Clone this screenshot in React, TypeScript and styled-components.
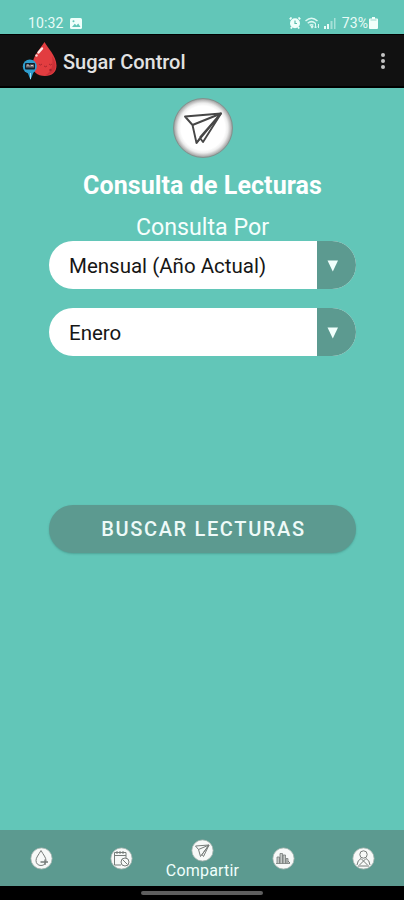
import React from "react";
import styled, { createGlobalStyle } from "styled-components";

const teal = "#62c6b8";
const sage = "#5c9a90";

const GlobalStyle = createGlobalStyle`
  * { box-sizing: border-box; }
  body { margin: 0; background: ${teal}; font-family: Roboto, "Liberation Sans", sans-serif; }
`;

const Screen = styled.div`
  width: 404px;
  height: 900px;
  display: flex;
  flex-direction: column;
  overflow: hidden;
  background: ${teal};
`;

const StatusBar = styled.div`
  height: 34px;
  flex: none;
  display: flex;
  justify-content: space-between;
  align-items: flex-start;
  padding: 14px 26px 0 28px;
  color: #e9fbf7;
  font-size: 14px;
  line-height: 18px;
`;

const StatusGroup = styled.div<{ $gap: number }>`
  display: flex;
  align-items: center;
  gap: ${(p) => p.$gap}px;
  height: 18px;
  svg { display: block; }
`;

const Clock = styled.span`
  letter-spacing: 0.15px;
`;

const Battery = styled.span`
  display: flex;
  align-items: center;
  gap: 1px;
  margin-left: 2px;
  letter-spacing: 0.1px;
`;

const AppBar = styled.header`
  height: 54px;
  flex: none;
  display: flex;
  align-items: center;
  padding: 0 19px 0 22px;
  background: #111;
  border-top: 1px solid #000;
  border-bottom: 2px solid #000;
`;

const AppTitle = styled.h1`
  flex: 1;
  margin: 2px 0 0 4px;
  color: #e2e2e2;
  font-size: 20px;
  font-weight: 500;
  line-height: 24px;
  letter-spacing: -0.03px;
`;

const MenuButton = styled.button`
  display: flex;
  flex-direction: column;
  gap: 2px;
  padding: 0;
  border: 0;
  background: none;
`;

const MenuDot = styled.i`
  width: 4px;
  height: 4px;
  border-radius: 50%;
  background: #c4c4c4;
`;

const Content = styled.main`
  flex: 1;
  display: flex;
  flex-direction: column;
  align-items: center;
  padding: 10px 0 0 1px;
`;

const HeroBadge = styled.div`
  width: 60px;
  height: 60px;
  flex: none;
  border-radius: 50%;
  border: 1px solid #82918d;
  background: radial-gradient(circle closest-side, #fff 0 76%, #ededed 86%, #a3a3a3 100%);
  svg { display: block; }
`;

const Title = styled.h2`
  margin: 13px 0 0;
  color: #fff;
  font-size: 25px;
  font-weight: 700;
  line-height: 30px;
  letter-spacing: 0.08px;
  white-space: nowrap;
`;

const Label = styled.p`
  margin: 12px 0 0;
  color: #f6fffd;
  font-size: 23.200px;
  line-height: 28px;
`;

const Select = styled.button<{ $top: number }>`
  width: 307px;
  height: 48px;
  flex: none;
  margin: ${(p) => p.$top}px 0 0;
  display: flex;
  padding: 0;
  border: 0;
  border-radius: 24px;
  overflow: hidden;
  background: #fff;
  font-family: inherit;
`;

const SelectValue = styled.span`
  flex: 1;
  padding-left: 20px;
  color: #161616;
  font-size: 20.500px;
  line-height: 50px;
  text-align: left;
`;

const SelectArrow = styled.span`
  width: 39px;
  height: 48px;
  background: ${sage};
  svg { display: block; }
`;

const SearchButton = styled.button`
  width: 307px;
  height: 48px;
  flex: none;
  margin-top: 149px;
  padding: 0 0 0 2px;
  border: 0;
  border-radius: 24px;
  background: ${sage};
  box-shadow: 0 1px 2px rgba(55, 120, 110, 0.45);
  color: #eefaf8;
  font-family: inherit;
  font-size: 20px;
  font-weight: 500;
  line-height: 48px;
  letter-spacing: 1.650px;
`;

const TabBar = styled.nav`
  height: 56px;
  flex: none;
  display: grid;
  grid-template-columns: repeat(5, 1fr);
  padding-left: 1px;
  background: ${sage};
`;

const Tab = styled.a<{ $active?: boolean }>`
  display: flex;
  flex-direction: column;
  align-items: center;
  padding-top: ${(p) => (p.$active ? 9 : 17)}px;
  color: #f0fffc;
  font-size: 16px;
  line-height: 18px;
  letter-spacing: 0.2px;
  svg { display: block; flex: none; }
`;

const GestureArea = styled.footer`
  height: 14px;
  flex: none;
  display: flex;
  justify-content: center;
  padding-top: 5px;
  background: #000;
`;

const GestureHandle = styled.div`
  width: 122px;
  height: 4px;
  border-radius: 2px;
  background: #5e5e5e;
`;

const DropLogo = () => (
  <svg width="37" height="40" viewBox="0 0 37 40">
    <path d="M22.5 1C25 6 34.5 15 34.5 24.5C34.5 31 30 35 23 35C15 35 10.5 30.5 10.5 24C10.5 15 19 7 22.5 1Z" fill="#e23d40" />
    <path d="M30 15C36 24 35 33 23 34.500C31 30 31 22 30 15Z" fill="#cc3037" />
    <path d="M16.500 11.500L20 7.500" stroke="#ffe7e5" strokeWidth="2.400" strokeLinecap="round" />
    <circle cx="14.500" cy="14.500" r="1.200" fill="#ffd5d3" />
    <path d="M17 23Q18.500 25 20 23M22 25Q23.500 26.500 25 25M27 23Q28.500 25 30 23" fill="none" stroke="#9c2229" strokeWidth=".8" />
    <circle cx="28.500" cy="29" r="1.200" fill="#a5212a" />
    <path d="M5 30H12L8.500 39Z" fill="#2e9dce" />
    <circle cx="7.800" cy="25.500" r="7" fill="#2e9dce" />
    <rect x="3" y="22" width="10" height="6.500" rx="1" fill="#141e29" />
    <path d="M5 23.500V26.500M5 24H7V26.500M9 23.500V26.500M9 24.500H11M11 23.500V26.500" stroke="#e9d9d6" strokeWidth="0.900" fill="none" />
    <path d="M8.500 32V38" stroke="#a3ddf1" />
  </svg>
);

const PictureIcon = () => (
  <svg width="12" height="11" viewBox="0 0 12 11">
    <rect width="12" height="11" rx="1.500" fill="#effffb" />
    <path d="M2 9L4.800 5.800L6.500 7.500L8.200 5.500L10.500 9Z" fill={teal} />
    <circle cx="3.500" cy="3.200" r="1" fill={teal} />
  </svg>
);

const AlarmIcon = () => (
  <svg width="12" height="12" viewBox="0 0 12 12">
    <path d="M2.500 .5L.8 2.300M9.500 .5L11.200 2.300M3 10L1.800 11.500M9 10L10.200 11.500" stroke="#effffb" strokeWidth="1.800" />
    <circle cx="6" cy="6.300" r="5" fill="#effffb" />
    <path d="M6 3.500V6.500H8" fill="none" stroke="#5ebdad" strokeWidth="1.200" />
  </svg>
);

const WifiIcon = () => (
  <svg width="15" height="12" viewBox="0 0 15 12" fill="none" stroke="#dcf8f2" strokeWidth="1.500">
    <path d="M.5 4Q6.500 -1.500 12.500 4M2.700 6.200Q6.500 3 10.300 6.200M4.700 8.400Q6.500 7 8.300 8.400" />
    <path d="M6 9.300L7 10.500L8 9.300" />
    <path d="M10.500 6V11M9 9.500L10.500 11L12 9.500M13.500 11V7" strokeWidth="1" />
  </svg>
);

const SignalIcon = () => (
  <svg width="12" height="11" viewBox="0 0 12 11" fill="#e9fbf7">
    <path d="M0 8H2V11H0ZM3 6H5V11H3Z" />
    <path d="M6.500 3H8.500V11H6.500ZM10 0H11.500V11H10Z" opacity=".5" />
  </svg>
);

const BatteryIcon = () => (
  <svg width="9" height="12" viewBox="0 0 9 12">
    <path d="M3 0H6V1.500H8Q9 1.500 9 2.500V11Q9 12 8 12H1Q0 12 0 11V2.500Q0 1.500 1 1.500H3Z" fill="#f2fffb" />
    <path d="M1.500 3H7.500" stroke="#9bd9cd" />
  </svg>
);

const HeroPlane = () => (
  <svg width="58" height="58" viewBox="0 0 58 58" fill="none" stroke="#474747" strokeWidth="1.900" strokeLinejoin="round">
    <path d="M11 17.500L47 14.500L22.500 44L18.500 26Z" />
    <path d="M18.500 26L47 14.500L26 38.500M22.500 44L26 39L29 43L47 14.500" />
  </svg>
);

const DownArrow = () => (
  <svg width="39" height="48" viewBox="0 0 39 48">
    <path d="M10.500 19.500H21L15.800 30.500Z" fill="#f1fffc" />
  </svg>
);

const NavIcon = ({ children }: { children: React.ReactNode }) => (
  <svg width="23" height="23" viewBox="0 0 23 23" fill="none" stroke="#777c7a" strokeWidth="1">
    <circle cx="11.500" cy="11.500" r="10.600" fill="#f7f9f8" stroke="#a9b5b1" strokeWidth=".8" />
    {children}
  </svg>
);

const tabs = [
  {
    key: "reading",
    drawing: (
      <>
        <path d="M11 3.500C8.500 8 6 10.500 6 13.500C6 16.500 8 18.500 11 18.500C14 18.500 16 16.500 16 13.500C16 10.500 13.500 8 11 3.500Z" />
        <path d="M10.500 15H18M15 12.500V18" strokeWidth="1.300" />
      </>
    ),
  },
  {
    key: "calendar",
    drawing: (
      <>
        <path d="M11 18H4.500V5.500H16V11M4.500 8.500H16M7 4V7M10 4V7M13 4V7" />
        <circle cx="15" cy="15" r="4" />
        <path d="M12.500 12.500L17.500 17.500" />
      </>
    ),
  },
  {
    key: "share",
    label: "Compartir",
    drawing: <path d="M4.500 7L18 6L9.500 17.500L7.500 10.500ZM7.500 10.500L18 6L11 15.500L12.500 17.500L18 6" />,
  },
  {
    key: "chart",
    drawing: (
      <>
        <path d="M5 16.500V10H7.500V16.500M8 16.500V6.500H10.500V16.500M11 16.500V8H13.500V16.500M14 16.500V11.500H16V16.500M4 16.500H18" fill="#c4c8c6" strokeWidth=".8" />
        <path d="M16 14L18 16" />
      </>
    ),
  },
  {
    key: "profile",
    drawing: (
      <>
        <circle cx="11.500" cy="7.500" r="3.700" />
        <path d="M5 18Q5.500 13 9 11.500L11.500 14L14 11.500Q17.500 13 18 18M7.500 18L11.500 14L15.500 18M6 19H17" />
      </>
    ),
  },
];

export default function App() {
  return (
    <>
      <GlobalStyle />
      <Screen>
        <StatusBar>
          <StatusGroup $gap={6}>
            <Clock>10:32</Clock>
            <PictureIcon />
          </StatusGroup>
          <StatusGroup $gap={4}>
            <AlarmIcon />
            <WifiIcon />
            <SignalIcon />
            <Battery>73%<BatteryIcon /></Battery>
          </StatusGroup>
        </StatusBar>
        <AppBar>
          <DropLogo />
          <AppTitle>Sugar Control</AppTitle>
          <MenuButton aria-label="Menú"><MenuDot /><MenuDot /><MenuDot /></MenuButton>
        </AppBar>
        <Content>
          <HeroBadge><HeroPlane /></HeroBadge>
          <Title>Consulta de Lecturas</Title>
          <Label>Consulta Por</Label>
          <Select $top={0}>
            <SelectValue>Mensual (Año Actual)</SelectValue>
            <SelectArrow><DownArrow /></SelectArrow>
          </Select>
          <Select $top={19}>
            <SelectValue>Enero</SelectValue>
            <SelectArrow><DownArrow /></SelectArrow>
          </Select>
          <SearchButton>BUSCAR LECTURAS</SearchButton>
        </Content>
        <TabBar>
          {tabs.map((tab) => (
            <Tab key={tab.key} $active={!!tab.label}>
              <NavIcon>{tab.drawing}</NavIcon>
              {tab.label}
            </Tab>
          ))}
        </TabBar>
        <GestureArea><GestureHandle /></GestureArea>
      </Screen>
    </>
  );
}
